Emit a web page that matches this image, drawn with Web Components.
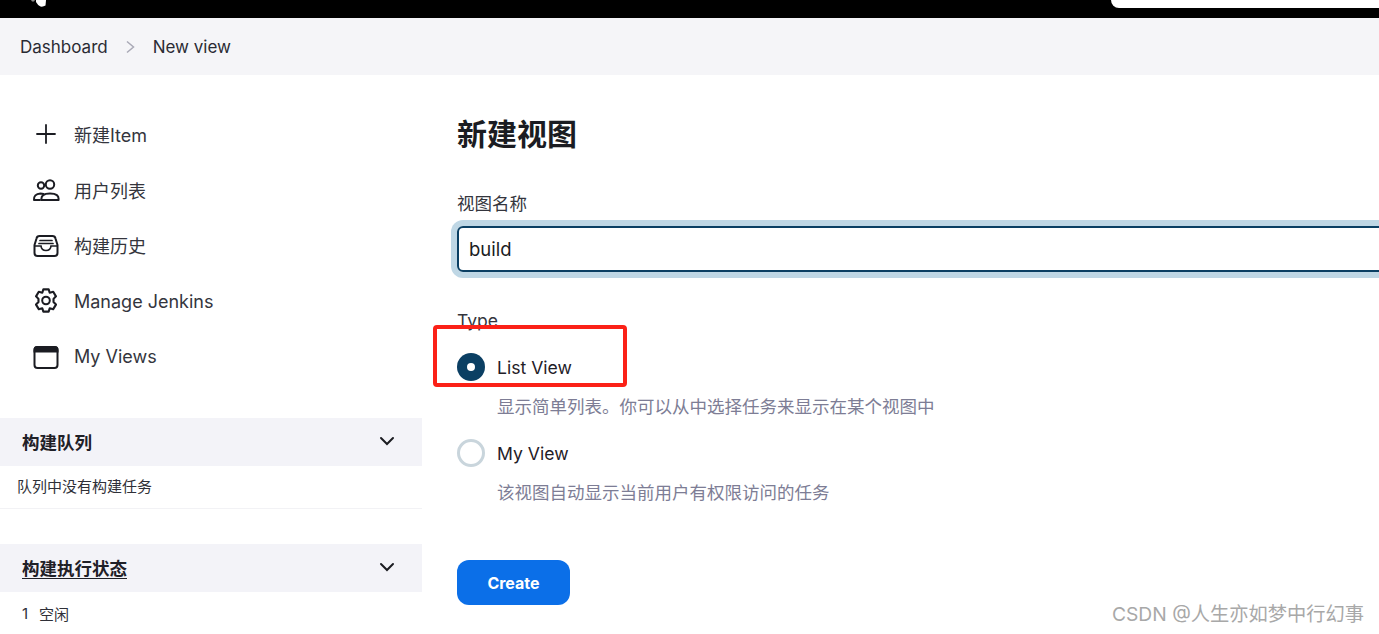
<!DOCTYPE html>
<html lang="zh">
<head>
<meta charset="utf-8">
<title>New view</title>
<style>
  html, body { height: 100%; }
  body {
    margin: 0;
    height: 634px;
    overflow: hidden;
    position: relative;
    background: #fff;
    color: #1b1c22;
    font-family: Inter, "Noto Sans CJK SC", sans-serif;
  }
  .layout { display: flex; align-items: flex-start; }
</style>
</head>
<body>
<top-bar></top-bar>
<bread-crumbs>
  <span>Dashboard</span>
  <span>New view</span>
</bread-crumbs>
<div class="layout">
  <side-panel>
    <nav-item icon="plus">新建Item</nav-item>
    <nav-item icon="people">用户列表</nav-item>
    <nav-item icon="inbox">构建历史</nav-item>
    <nav-item icon="gear">Manage Jenkins</nav-item>
    <nav-item icon="window">My Views</nav-item>
    <side-box slot="boxes" title="构建队列">队列中没有构建任务</side-box>
    <side-box slot="boxes" title="构建执行状态" link><span class="num">1</span>空闲</side-box>
  </side-panel>
  <new-view-form></new-view-form>
</div>
<mark-box></mark-box>
<water-mark>CSDN @人生亦如梦中行幻事</water-mark>

<script>
"use strict";

class TopBar extends HTMLElement {
  connectedCallback() {
    this.attachShadow({mode: "open"}).innerHTML = `
      <style>
        :host { display: flex; justify-content: space-between; height: 18px; background: #000; overflow: hidden; }
        svg { margin-left: 28px; display: block; }
        .search { width: 268px; height: 8px; background: #fff; border-bottom-left-radius: 8px; }
      </style>
      <svg width="20" height="18" viewBox="0 0 20 18">
        <path fill="#8a8a8a" d="M3 0h4l-1 1.500H4z"/>
        <path fill="#fff" d="M8 0h10l-.5 5.500Q15 7 12.500 6.500 9.500 5 8 2z"/>
      </svg>
      <div class="search"></div>`;
  }
}

class BreadCrumbs extends HTMLElement {
  connectedCallback() {
    this.attachShadow({mode: "open"}).innerHTML = `
      <style>
        :host { display: flex; align-items: center; height: 57px; padding-left: 20px; background: #f5f5f8; font-size: 17px; color: #2a2b33; }
        svg { margin: 0 16px 0 17px; flex: none; }
      </style>
      <slot name="first"></slot>
      <svg width="12" height="14" viewBox="0 0 12 14" fill="none" stroke="#a9a9b6" stroke-width="1.500"><path d="M2 1.500 8.500 7 2 12.500"/></svg>
      <slot name="second"></slot>`;
    const items = this.querySelectorAll("span");
    items[0].slot = "first";
    items[1].slot = "second";
  }
}

class SidePanel extends HTMLElement {
  connectedCallback() {
    this.attachShadow({mode: "open"}).innerHTML = `
      <style>
        :host { display: block; width: 422px; flex: none; }
        nav { display: flex; flex-direction: column; padding: 31px 0 33px; }
        .boxes { display: flex; flex-direction: column; gap: 35px; }
      </style>
      <nav><slot></slot></nav>
      <div class="boxes"><slot name="boxes"></slot></div>`;
  }
}

const ICONS = {
  plus: `<path d="M14 5v18M5 14h18" stroke-width="1.800"/>`,
  people: `<circle cx="9" cy="9.500" r="3.200"/><circle cx="18" cy="8.500" r="4.200"/>
    <path d="M2 24q-.5-6 6.500-6.500 1.500 0 3 .5M8 24H2"/><path d="M9.500 24q-1-6.500 8.500-6.500t8.500 6.500z" stroke-linejoin="round"/>`,
  inbox: `<path d="M2.500 14 4.500 7.500Q5 5 7.500 5h13Q23 5 23.500 7.500L25.500 14v8q0 3-3 3h-17q-3 0-3-3z" stroke-linejoin="round"/>
    <path d="M3 15h6q.5 4.500 5 4.500t5-4.500h6M8 9.500h12M7 12.500h14" stroke-width="1.700"/>`,
  gear: `<circle cx="14" cy="13.500" r="3.800"/>
    <g transform="translate(14 14) scale(1.060) translate(-14 -14)"><path d="M11.500 3h5l1 3.200 3.300-.9 2.600 4.300-2.300 2.400v3l2.300 2.400-2.600 4.300-3.300-.9-1 3.200h-5l-1-3.200-3.300.9-2.600-4.300 2.300-2.400v-3L4.600 9.600l2.600-4.300 3.300.9z" stroke-linejoin="round"/></g>`,
  window: `<rect x="2.500" y="4" width="23" height="21" rx="3"/><path d="M2.500 7q0-3 3-3h17q3 0 3 3v1.500h-23z" fill="#1b1c22"/>`
};

class NavItem extends HTMLElement {
  connectedCallback() {
    this.attachShadow({mode: "open"}).innerHTML = `
      <style>
        :host { display: flex; align-items: center; height: 55.75px; padding-left: 32px; gap: 14px; font-size: 18px; color: #34353d; }
        svg { flex: none; display: block; }
      </style>
      <svg width="28" height="28" viewBox="0 0 28 28" fill="none" stroke="#1b1c22" stroke-width="2" stroke-linecap="round">${ICONS[this.getAttribute("icon")]}</svg>
      <slot></slot>`;
  }
}

class SideBox extends HTMLElement {
  connectedCallback() {
    const link = this.hasAttribute("link");
    this.attachShadow({mode: "open"}).innerHTML = `
      <style>
        :host { display: block; }
        .head { display: flex; align-items: center; justify-content: space-between; height: 48px; padding: 0 27px 0 22px; background: #f3f3f8; font-size: 17.500px; font-weight: 700; color: #1f2027; }
        .title { text-decoration: ${link ? "underline" : "none"}; text-underline-offset: 3px; }
        svg { display: block; margin-bottom: 2px; }
        .body { display: flex; align-items: center; height: 39px; padding: ${link ? "2px" : "0"} 0 ${link ? "1px" : "3px"} ${link ? 22 : 17}px; font-size: 15px; color: #2f3038; border-bottom: 1px solid #f2f2f5; }
        ::slotted(.num) { width: 17px; }
      </style>
      <div class="head">
        <span class="title">${this.getAttribute("title")}</span>
        <svg width="16" height="10" viewBox="0 0 16 10" fill="none" stroke="#1b1c22" stroke-width="2" stroke-linecap="round"><path d="M2 2l6 6 6-6"/></svg>
      </div>
      <div class="body"><slot></slot></div>`;
  }
}

class RadioOption extends HTMLElement {
  connectedCallback() {
    const on = this.hasAttribute("checked");
    this.attachShadow({mode: "open"}).innerHTML = `
      <style>
        :host { display: block; }
        .row { display: flex; align-items: center; gap: 12px; height: 28px; font-size: 17.600px; color: #1f2027; }
        .dot { width: 28px; height: 28px; box-sizing: border-box; border-radius: 50%; flex: none; display: flex; align-items: center; justify-content: center; }
        .on { background: #0b3f63; }
        .on::after { content: ""; width: 8px; height: 8px; border-radius: 50%; background: #fff; }
        .off { border: 3px solid #c9d5dc; }
        .desc { margin: 13px 0 0 40px; font-size: 17.500px; line-height: 26px; color: #7d7d95; }
      </style>
      <div class="row"><span class="dot ${on ? "on" : "off"}"></span><span>${this.getAttribute("label")}</span></div>
      <div class="desc"><slot></slot></div>`;
  }
}

class NewViewForm extends HTMLElement {
  connectedCallback() {
    this.attachShadow({mode: "open"}).innerHTML = `
      <style>
        :host { display: block; flex: 1; min-width: 0; padding: 38px 0 0 35px; overflow: hidden; font-size: 17.500px; color: #34353d; }
        h1 { margin: 0; font-size: 30px; line-height: 42px; font-weight: 700; color: #1b1c22; }
        label { display: block; margin-top: 36px; line-height: 26px; }
        .wrap { padding: 0 0 0 6px; margin-left: -6px; }
        .ring { margin: 9px -60px 0 0; height: 42px; border: 2px solid #0b3f63; border-radius: 6px; box-shadow: 0 0 0 6px #bfd7e5; display: flex; align-items: center; padding-left: 10px; font-size: 18.500px; color: #1b1c22; }
        .type { margin-top: 36px; line-height: 26px; }
        .options { margin-top: 19px; }
        radio-option + radio-option { margin-top: 19px; }
        button { display: block; margin-top: 54px; width: 113px; height: 45px; border: 0; border-radius: 12px; background: #0b6fe8; color: #fff; font: 700 16px Inter, sans-serif; }
      </style>
      <h1>新建视图</h1>
      <label>视图名称</label>
      <div class="wrap"><div class="ring">build</div></div>
      <div class="type">Type</div>
      <div class="options">
        <radio-option label="List View" checked>显示简单列表。你可以从中选择任务来显示在某个视图中</radio-option>
        <radio-option label="My View">该视图自动显示当前用户有权限访问的任务</radio-option>
      </div>
      <button>Create</button>`;
  }
}

// 画像の注釈なので上に重ねる
class MarkBox extends HTMLElement {
  connectedCallback() {
    this.attachShadow({mode: "open"}).innerHTML = `
      <style>
        :host { position: absolute; left: 433px; top: 325px; width: 194px; height: 62px; box-sizing: border-box; border: 4px solid #fb2117; border-radius: 4px; }
      </style>`;
  }
}

class WaterMark extends HTMLElement {
  connectedCallback() {
    this.attachShadow({mode: "open"}).innerHTML = `
      <style>
        :host { position: absolute; right: 15px; top: 601px; font-size: 19.250px; line-height: 26px; color: #a8a8a8; white-space: nowrap; }
      </style>
      <slot></slot>`;
  }
}

customElements.define("top-bar", TopBar);
customElements.define("bread-crumbs", BreadCrumbs);
customElements.define("side-panel", SidePanel);
customElements.define("nav-item", NavItem);
customElements.define("side-box", SideBox);
customElements.define("radio-option", RadioOption);
customElements.define("new-view-form", NewViewForm);
customElements.define("mark-box", MarkBox);
customElements.define("water-mark", WaterMark);
</script>
</body>
</html>
